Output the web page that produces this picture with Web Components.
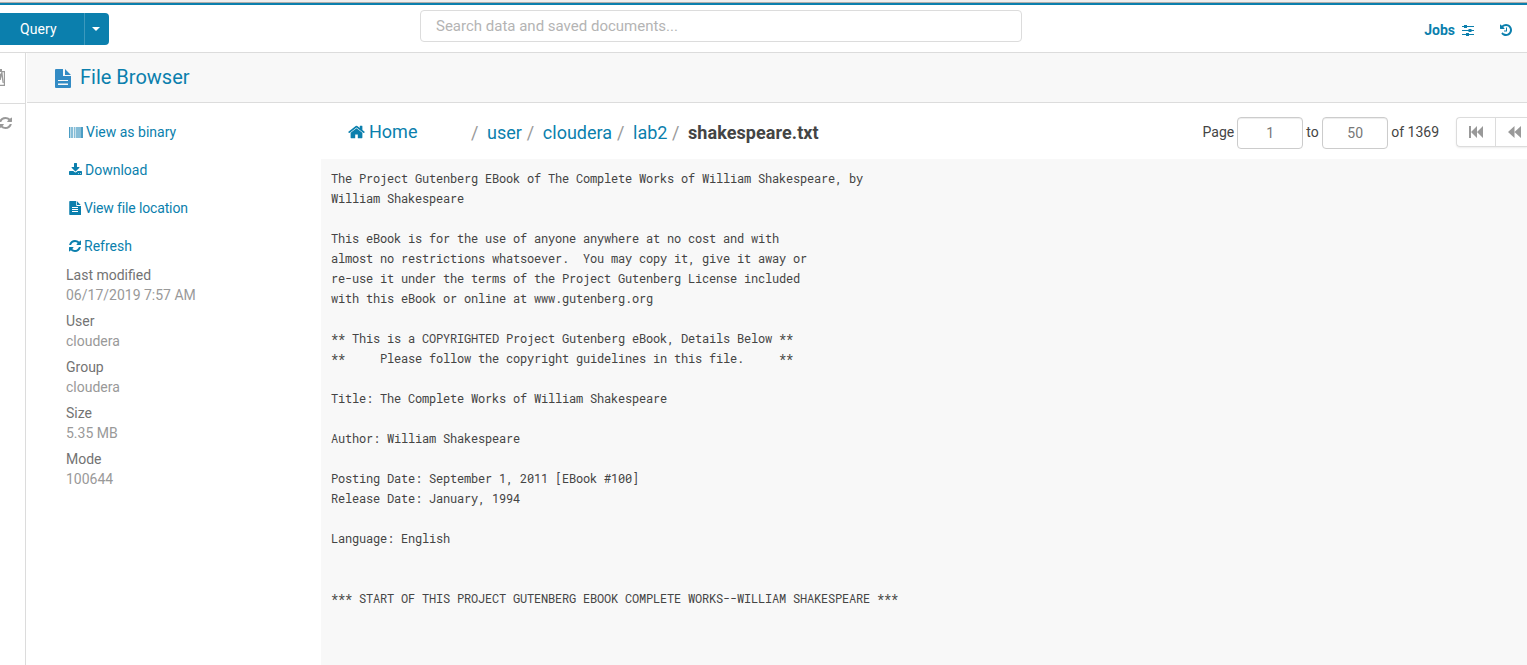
<!DOCTYPE html>
<html lang="en">
<head>
<meta charset="utf-8">
<title>File Browser</title>
<style>
html,body{margin:0;height:100%;overflow:hidden}
body{font-family:Roboto,"Liberation Sans",sans-serif;font-size:14px;line-height:20px;color:#444;background:#fff}
</style>
</head>
<body>
<hue-app></hue-app>
<script>
const ICONS = {
  file: ['128 0 1536 1792', 'M1596 476q14 14 28 36h-472v-472q22 14 36 28zM1152 640h544v1056q0 40-28 68t-68 28h-1344q-40 0-68-28t-28-68v-1600q0-40 28-68t68-28h800v544q0 40 28 68t68 28zM1280 1376v-64q0-14-9-23t-23-9h-704q-14 0-23 9t-9 23v64q0 14 9 23t23 9h704q14 0 23-9t9-23zm0-256v-64q0-14-9-23t-23-9h-704q-14 0-23 9t-9 23v64q0 14 9 23t23 9h704q14 0 23-9t9-23zm0-256v-64q0-14-9-23t-23-9h-704q-14 0-23 9t-9 23v64q0 14 9 23t23 9h704q14 0 23-9t9-23z'],
  page: ['0 0 16 19', 'M1 0h7v7h8v11a1 1 0 0 1-1 1H1a1 1 0 0 1-1-1V1a1 1 0 0 1 1-1zM10 0l6 6h-6zM3 11v1h10v-1zM3 14.500v1.500h10v-1.500z'],
  home: ['64 64 1664 1664', 'M1472 992v480q0 26-19 45t-45 19h-384v-384h-256v384h-384q-26 0-45-19t-19-45v-480q0-1 .5-3t.5-3l575-474 575 474q1 2 1 6zm223-69l-62 74q-8 9-21 11h-3q-13 0-21-7l-692-577-692 577q-12 8-24 7-13-2-21-11l-62-74q-8-10-7-23.500t11-21.500l719-599q32-26 76-26t76 26l244 204v-195q0-14 9-23t23-9h192q14 0 23 9t9 23v408l219 182q10 8 11 21.500t-7 23.500z'],
  refresh: ['128 128 1536 1536', 'M1639 1056q0 5-1 7-64 268-268 434.500t-478 166.500q-146 0-282.500-55t-243.500-157l-129 129q-19 19-45 19t-45-19-19-45v-448q0-26 19-45t45-19h448q26 0 45 19t19 45-19 45l-137 137q71 66 161 102t187 36q134 0 250-65t186-179q11-17 53-117 8-23 30-23h192q13 0 22.500 9.500t9.500 22.500zm25-800v448q0 26-19 45t-45 19h-448q-26 0-45-19t-19-45 19-45l138-138q-148-137-349-137-134 0-250 65t-186 179q-11 17-53 117-8 23-30 23h-199q-13 0-22.500-9.500t-9.500-22.500v-7q65-268 270-434.500t480-166.500q146 0 284 55.500t245 156.500l130-129q19-19 45-19t45 19 19 45z'],
  download: ['64 0 1664 1536', 'M1344 1344q0-26-19-45t-45-19-45 19-19 45 19 45 45 19 45-19 19-45zm256 0q0-26-19-45t-45-19-45 19-19 45 19 45 45 19 45-19 19-45zm128-224v320q0 40-28 68t-68 28h-1472q-40 0-68-28t-28-68v-320q0-40 28-68t68-28h465l135 136q58 56 136 56t136-56l136-136h464q40 0 68 28t28 68zm-325-569q17 41-14 70l-448 448q-18 19-45 19t-45-19l-448-448q-31-29-14-70 17-39 59-39h256v-448q0-26 19-45t45-19h256q26 0 45 19t19 45v448h256q42 0 59 39z'],
  history: ['128 128 1536 1536', 'M1664 896q0 156-61 298t-164 245-245 164-298 61q-172 0-327-72.500t-264-204.500q-7-10-6.500-22.500t8.500-20.500l137-138q10-9 25-9 16 2 23 12 73 95 179 147t225 52q104 0 198.500-40.500t163.500-109.500 109.500-163.500 40.500-198.500-40.500-198.500-109.500-163.500-163.500-109.500-198.500-40.500q-98 0-188 35.500t-160 101.500l137 138q31 30 14 69-17 40-59 40h-448q-26 0-45-19t-19-45v-448q0-42 40-59 39-17 69 14l130 129q107-101 244.500-156.500t284.500-55.500q156 0 298 61t245 164 164 245 61 298zm-640-288v448q0 14-9 23t-23 9h-320q-14 0-23-9t-9-23v-64q0-14 9-23t23-9h224v-352q0-14 9-23t23-9h64q14 0 23 9t9 23z'],
  sliders: ['0 0 12 11', 'M0 1h12v1H0zM2 0h3v3H2zM0 5h12v1H0zM6.500 4h3v3h-3zM0 9h12v1H0zM4 8h3v3H4z'],
  caret: ['0 0 8 4', 'M0 0h8L4 4z'],
  first: ['0 0 14 12', 'M0 0h2v12H0zM8 0v12L2 6zM14 0v12L8 6z'],
  rewind: ['0 0 12 12', 'M6 0v12L0 6zM12 0v12L6 6z'],
  clip: ['0 0 5 17', 'M0 0h2v2h3v15H0v-1.200h3.800V3.200H2.500L3.700 14H2.600L1.500 7 .8 11H0V5l1.200-1V3H0z']
};
const define = (name, html) => {
  const t = document.createElement('template');
  t.innerHTML = html;
  customElements.define(name, class extends HTMLElement {
    constructor() { super(); this.attachShadow({mode: 'open'}).append(t.content.cloneNode(true)); }
  });
};
customElements.define('hue-icon', class extends HTMLElement {
  constructor() { super(); this.attachShadow({mode: 'open'}); }
  connectedCallback() {
    const [box, d] = ICONS[this.getAttribute('name')];
    this.shadowRoot.innerHTML = `<style>:host{display:block;flex:none}svg{display:block;width:100%;height:100%;fill:currentColor}</style><svg viewBox="${box}" preserveAspectRatio="none"><path fill-rule="${this.getAttribute('name') === 'page' ? 'evenodd' : 'nonzero'}" d="${d}"/></svg>`;
  }
});
define('hue-barcode', `<style>:host{display:block;flex:none;width:14px;height:11px;background:linear-gradient(90deg,#4b9dc4 0 1px,#b9dae8 1px 2px,#86bdd7 2px 4px,#e4f0f6 4px 5px,#86bdd7 5px 6px,#c7e1ec 6px 7px,#86bdd7 7px 12px,#4b9dc4 12px 14px)}</style>`);
define('hue-topbar', `<style>
:host{display:block;height:52px;border-bottom:1px solid #dcdcdc;box-sizing:content-box}
.edge{height:2px;background:#eee}.edge2{height:1px;background:#b3aca8}.stripe{height:2px;background:#0b7fad}
.row{display:flex;height:47px}
.q{display:flex;margin-top:8px;width:109px;height:32px;background:#0b7fad;color:#fff;border-radius:0 4px 4px 0;align-items:center;font-size:14px;letter-spacing:.1px}
.q span{width:84px;padding-left:20px;box-sizing:border-box}
.q div{border-left:1px solid #3c99bd;height:32px;flex:1;display:flex;align-items:center;padding-left:7px}
.q hue-icon{width:8px;height:4px}
.s{margin:5px 0 0 311px;width:602px;height:32px;box-sizing:border-box;border:1px solid #dcdcdc;border-radius:4px;padding:5px 15px;color:#b4b4b4;font-size:15px;line-height:20px}
.r{margin-left:auto;display:flex;align-items:center;height:50px;padding-right:15px;color:#0b7fad;font-weight:500}
</style>
<div class="edge"></div><div class="edge2"></div><div class="stripe"></div>
<div class="row"><div class="q"><span>Query</span><div><hue-icon name="caret"></hue-icon></div></div>
<div class="s">Search data and saved documents...</div>
<div class="r"><b>Jobs</b><hue-icon name="sliders" style="width:12px;height:11px;margin:1px 0 0 7px"></hue-icon><hue-icon name="history" style="width:12px;height:12px;margin-left:26px"></hue-icon></div></div>`);
define('hue-rail', `<style>:host{display:block;width:25px;flex:none;border-right:1px solid #dcdcdc;color:#999}
.a{height:50px;border-bottom:1px solid #dcdcdc;display:flex;box-sizing:content-box}.a hue-icon{width:5px;height:17px;margin-top:16px}
.b hue-icon{width:13px;height:12px;margin:13px 0 0 -1px}</style>
<div class="a"><hue-icon name="clip"></hue-icon></div><div class="b"><hue-icon name="refresh"></hue-icon></div>`);
define('hue-title', `<style>:host{display:flex;height:49px;margin-left:1px;background:#f8f8f8;border-bottom:1px solid #dcdcdc;align-items:center;color:#0b7fad;font-size:20px;padding-left:28px}
hue-icon{width:16px;height:19px;margin-right:9px;margin-top:2px;color:#338bc4}span{margin-top:-2px}</style><hue-icon name="page"></hue-icon><span><slot></slot></span>`);
define('hue-action', `<style>:host{display:flex;height:20px;align-items:center;margin-bottom:18px;color:#0b7fad}</style><slot></slot>`);
define('hue-meta', `<style>:host{display:block;margin-bottom:6px;color:#999}.l{color:#737373}</style><div class="l"><slot name="label"></slot></div><div><slot></slot></div>`);
define('hue-side', `<style>:host{display:block;width:295px;flex:none;box-sizing:border-box;padding:19px 0 0 40px}
.acts{padding-left:3px}hue-icon{margin-right:3px}.m{margin-top:-9px}</style>
<div class="acts">
<hue-action><hue-barcode></hue-barcode><span style="margin-left:3px">View as binary</span></hue-action>
<hue-action><hue-icon name="download" style="width:13px;height:12px;margin-bottom:2px"></hue-icon><span>Download</span></hue-action>
<hue-action><hue-icon name="file" style="width:12px;height:14px"></hue-icon><span style="letter-spacing:-.14px">View file location</span></hue-action>
<hue-action><hue-icon name="refresh" style="width:12px;height:12px"></hue-icon><span>Refresh</span></hue-action></div>
<div class="m">
<hue-meta><span slot="label">Last modified</span>06/17/2019 7:57 AM</hue-meta>
<hue-meta><span slot="label">User</span>cloudera</hue-meta>
<hue-meta><span slot="label">Group</span>cloudera</hue-meta>
<hue-meta><span slot="label">Size</span>5.35 MB</hue-meta>
<hue-meta><span slot="label">Mode</span>100644</hue-meta></div>`);
define('hue-crumbs', `<style>:host{display:flex;height:56px;padding-left:27px;align-items:center;font-size:18px;color:#0b7fad;overflow:hidden}
.home{display:flex;align-items:center;width:123px;margin-top:1px}.home hue-icon{width:17px;height:16px;margin-right:4px}
i{font-style:normal;color:#999;width:16px}.c{margin-top:3px;display:flex}.c span{margin-right:5px}.c b{color:#444;font-weight:700;letter-spacing:.08px}
.c span:last-of-type{margin-right:4.500px}
.pg{margin-left:auto;display:flex;align-items:center;font-size:14px;color:#444;margin-top:3px}
.pg span{margin-top:-1px}
.in{width:66px;height:32px;box-sizing:border-box;border:1px solid #ccc;border-radius:4px;text-align:center;line-height:31px;color:#777;margin:0 3px;box-shadow:inset 0 1px 1px rgba(0,0,0,.075)}
.bt{display:flex;margin-left:17px;height:30px;box-sizing:border-box;border:1px solid #dcdcdc;border-right:0;border-radius:4px 0 0 4px;color:#999;box-shadow:0 1px 2px rgba(0,0,0,.08);margin-top:-2px;width:71px}
.bt div{display:flex;align-items:center;width:39px;padding-left:12px;box-sizing:border-box;border-right:1px solid #dcdcdc}.bt div+div{width:31px;border:0}</style>
<div class="home"><hue-icon name="home"></hue-icon><span>Home</span></div>
<div class="c"><i>/</i><span>user</span><i>/</i><span>cloudera</span><i>/</i><span>lab2</span><i>/</i><b>shakespeare.txt</b></div>
<div class="pg"><span>Page</span><div class="in">1</div><span style="width:13px">to</span><div class="in">50</div><span>of 1369</span>
<div class="bt"><div><hue-icon name="first" style="width:14px;height:12px"></hue-icon></div><div><hue-icon name="rewind" style="width:13px;height:12px"></hue-icon></div></div></div>`);
define('hue-text', `<style>:host{display:block;flex:1;background:#f8f8f8;padding:9px 10px;color:#444}
pre{margin:0;font:12px/20px "Roboto Mono","Liberation Mono",monospace;letter-spacing:-.2012px}</style>
<pre>The Project Gutenberg EBook of The Complete Works of William Shakespeare, by
William Shakespeare

This eBook is for the use of anyone anywhere at no cost and with
almost no restrictions whatsoever.  You may copy it, give it away or
re-use it under the terms of the Project Gutenberg License included
with this eBook or online at www.gutenberg.org

** This is a COPYRIGHTED Project Gutenberg eBook, Details Below **
**     Please follow the copyright guidelines in this file.     **

Title: The Complete Works of William Shakespeare

Author: William Shakespeare

Posting Date: September 1, 2011 [EBook #100]
Release Date: January, 1994

Language: English


*** START OF THIS PROJECT GUTENBERG EBOOK COMPLETE WORKS--WILLIAM SHAKESPEARE ***
</pre>`);
define('hue-app', `<style>:host{display:flex;flex-direction:column;height:100vh;overflow:hidden}
.body{display:flex;flex:1;min-height:0}.main{flex:1;min-width:0;display:flex;flex-direction:column}
.cols{display:flex;flex:1;min-height:0}.view{flex:1;min-width:0;display:flex;flex-direction:column}</style>
<hue-topbar></hue-topbar><div class="body"><hue-rail></hue-rail><div class="main"><hue-title>File Browser</hue-title>
<div class="cols"><hue-side></hue-side><div class="view"><hue-crumbs></hue-crumbs><hue-text></hue-text></div></div></div></div>`);
</script>
</body>
</html>
